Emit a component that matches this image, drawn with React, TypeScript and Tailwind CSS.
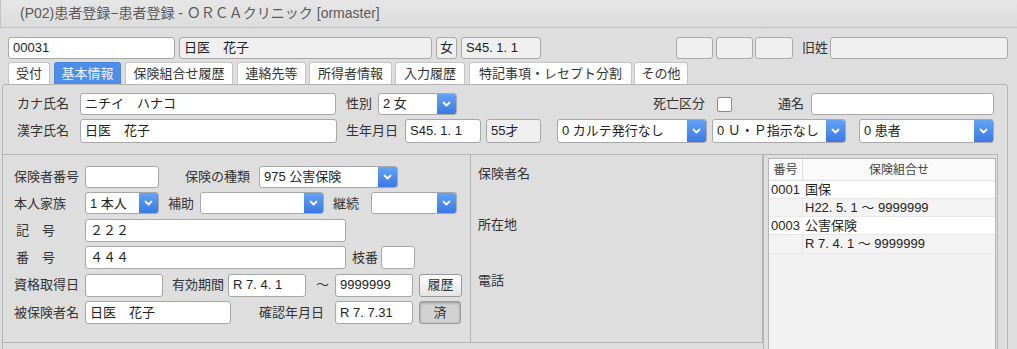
import React from "react";

const cx = (...a: (string | false | undefined)[]) => a.filter(Boolean).join(" ");

function Input({ cls, v, gray, center }: { cls: string; v?: string; gray?: boolean; center?: boolean }) {
  return (
    <div
      className={cx(
        "flex shrink-0 items-center rounded-[3px] border border-[#a8a8a8] px-[4px] text-[13px] text-[#222] whitespace-pre",
        gray ? "bg-[#efefef]" : "bg-white",
        center && "justify-center px-0",
        cls
      )}
    >
      {v}
    </div>
  );
}

function Chevron() {
  return (
    <svg width="9" height="6" viewBox="0 0 9 6">
      <polyline points="1.5,1.5 4.5,4.5 7.5,1.5" fill="none" stroke="white" strokeWidth="1.8" strokeLinecap="round" strokeLinejoin="round" />
    </svg>
  );
}

function Select({ cls, v }: { cls: string; v?: string }) {
  return (
    <div className={cx("flex shrink-0 items-stretch rounded-[3px] border border-[#a8a8a8] bg-white text-[13px] text-[#222]", cls)}>
      <div className="flex flex-1 items-center overflow-hidden whitespace-pre px-[4px]">{v}</div>
      <div className="flex w-[19px] items-center justify-center rounded-r-[2px] bg-linear-to-b from-[#64a3f6] to-[#3b78e2]">
        <Chevron />
      </div>
    </div>
  );
}

function Label({ cls, t }: { cls: string; t: string }) {
  return <div className={cx("shrink-0 whitespace-pre text-[13px] text-[#333]", cls)}>{t}</div>;
}

function Tab({ cls, t, active }: { cls: string; t: string; active?: boolean }) {
  return (
    <div
      className={cx(
        "flex h-[22px] shrink-0 items-center justify-center rounded-t-[3px] border border-b-0 text-[13px]",
        active ? "border-[#4a88e0] bg-[#4c8ee8] text-[#eef4ff]" : "border-[#c4c4c4] bg-white text-[#333]",
        cls
      )}
    >
      {t}
    </div>
  );
}

export default function App() {
  return (
    <div className="h-[349px] w-[1017px] overflow-hidden bg-[#dedede] font-['Liberation_Sans','Noto_Sans_CJK_JP',sans-serif]">
      {/* title bar */}
      <div className="flex h-[28px] items-center border-b border-l border-[#c2c2c2] bg-linear-to-b from-[#e6e6e6] to-[#dcdcdc] pl-[19px] text-[14px] text-[#5a5a5a]">
        (P02)患者登録−患者登録 - ＯＲＣＡクリニック [ormaster]
      </div>

      {/* top row */}
      <div className="mt-[9px] flex h-[22px] items-stretch pl-[8px]">
        <Input cls="w-[167px]" v="00031" />
        <Input cls="ml-[4px] w-[253px]" v="日医　花子" gray />
        <Input cls="ml-[4px] w-[21px]" v="女" gray center />
        <Input cls="ml-[4px] w-[80px]" v="S45. 1. 1" gray />
        <Input cls="ml-[135px] w-[37px]" gray />
        <Input cls="ml-[3px] w-[37px]" gray />
        <Input cls="ml-[2px] w-[38px]" gray />
        <Label cls="ml-[9px] w-[28px] self-center" t="旧姓" />
        <Input cls="w-[178px]" gray />
      </div>

      {/* tabs */}
      <div className="mt-[3px] flex pl-[8px]">
        <Tab cls="w-[42px]" t="受付" />
        <Tab cls="ml-[4px] w-[67px]" t="基本情報" active />
        <Tab cls="ml-[4px] w-[108px]" t="保険組合せ履歴" />
        <Tab cls="ml-[4px] w-[69px]" t="連絡先等" />
        <Tab cls="ml-[3px] w-[83px]" t="所得者情報" />
        <Tab cls="ml-[3px] w-[70px]" t="入力履歴" />
        <Tab cls="ml-[4px] w-[163px]" t="特記事項・レセプト分割" />
        <Tab cls="ml-[2px] w-[54px]" t="その他" />
      </div>

      {/* main panel */}
      <div className="ml-[2px] h-[280px] w-[1006px] rounded-t-[3px] border border-[#b5b5b5] bg-[#dedede] pt-[8px]">
        {/* upper row 1 */}
        <div className="flex h-[22px] items-stretch pl-[14px]">
          <Label cls="w-[63px] self-center" t="カナ氏名" />
          <Input cls="w-[256px]" v="ニチイ　ハナコ" />
          <Label cls="ml-[10px] w-[32px] self-center" t="性別" />
          <Select cls="w-[79px]" v="2 女" />
          <Label cls="ml-[196px] w-[64px] self-center" t="死亡区分" />
          <div className="h-[15px] w-[15px] shrink-0 self-center rounded-[2px] border border-[#8a8a8a] bg-white" />
          <Label cls="ml-[46px] w-[33px] self-center" t="通名" />
          <Input cls="w-[183px]" />
        </div>
        {/* upper row 2 */}
        <div className="mt-[4px] flex h-[24px] items-stretch pl-[14px]">
          <Label cls="w-[63px] self-center" t="漢字氏名" />
          <Input cls="w-[257px]" v="日医　花子" />
          <Label cls="ml-[9px] w-[59px] self-center" t="生年月日" />
          <Input cls="w-[76px]" v="S45. 1. 1" />
          <Input cls="ml-[5px] w-[55px]" v="55才" gray />
          <Select cls="ml-[16px] w-[150px]" v="0 カルテ発行なし" />
          <Select cls="ml-[5px] w-[134px]" v="0 Ｕ・Ｐ指示なし" />
          <Select cls="ml-[13px] w-[135px]" v="0 患者" />
        </div>

        {/* lower section */}
        <div className="mt-[11px] flex h-[220px] w-[995px] border-t border-r border-[#b5b5b5]">
          {/* left column */}
          <div className="flex h-[188px] w-[468px] shrink-0 flex-col gap-[4.4px] border-r border-b border-[#b5b5b5] pl-[11px] pt-[11px]">
            <div className="flex h-[22px] items-stretch">
              <Label cls="w-[71px] self-center" t="保険者番号" />
              <Input cls="w-[74px]" />
              <Label cls="ml-[26px] w-[74px] self-center" t="保険の種類" />
              <Select cls="w-[139px]" v="975 公害保険" />
            </div>
            <div className="flex h-[22px] items-stretch">
              <Label cls="w-[71px] self-center" t="本人家族" />
              <Select cls="w-[74px]" v="1 本人" />
              <Label cls="ml-[9px] w-[32px] self-center" t="補助" />
              <Select cls="w-[124px]" />
              <Label cls="ml-[9px] w-[38px] self-center" t="継続" />
              <Select cls="w-[86px]" />
            </div>
            <div className="flex h-[23px] items-stretch">
              <Label cls="w-[71px] self-center pl-[2px]" t="記　号" />
              <Input cls="w-[261px]" v="２２２" />
            </div>
            <div className="flex h-[23px] items-stretch">
              <Label cls="w-[71px] self-center pl-[2px]" t="番　号" />
              <Input cls="w-[261px]" v="４４４" />
              <Label cls="ml-[6px] w-[29px] self-center" t="枝番" />
              <Input cls="w-[34px]" />
            </div>
            <div className="flex h-[23px] items-stretch">
              <Label cls="w-[71px] self-center" t="資格取得日" />
              <Input cls="w-[78px]" />
              <Label cls="ml-[9px] w-[56px] self-center" t="有効期間" />
              <Input cls="w-[78px]" v="R 7. 4. 1" />
              <Label cls="ml-[10px] w-[19px] self-center" t="～" />
              <Input cls="w-[78px]" v="9999999" />
              <div className="ml-[6px] flex w-[43px] items-center justify-center rounded-[3px] border border-[#9a9a9a] bg-linear-to-b from-[#ffffff] to-[#e4e4e4] text-[13px] text-[#333]">
                履歴
              </div>
            </div>
            <div className="flex h-[23px] items-stretch">
              <Label cls="w-[71px] self-center" t="被保険者名" />
              <Input cls="w-[146px]" v="日医　花子" />
              <Label cls="ml-[28px] w-[76px] self-center" t="確認年月日" />
              <Input cls="w-[78px]" v="R 7. 7.31" />
              <div className="ml-[6px] flex w-[42px] items-center justify-center rounded-[3px] border border-[#9a9a9a] bg-[#d2d2d2] text-[13px] text-[#333] shadow-[inset_0_1px_3px_rgba(0,0,0,0.3)]">
                済
              </div>
            </div>
          </div>

          {/* middle column */}
          <div className="flex h-[188px] w-[292px] shrink-0 flex-col border-r border-b border-[#b5b5b5] pl-[7px] pt-[10px]">
            <Label cls="leading-[18px]" t="保険者名" />
            <Label cls="mt-[33px] leading-[18px]" t="所在地" />
            <Label cls="mt-[38px] leading-[18px]" t="電話" />
          </div>

          {/* right column */}
          <div className="w-[234px] shrink-0 border-l border-[#b5b5b5] pl-[4px] pt-[3px]">
            <div className="h-[210px] w-[228px] border border-[#b5b5b5] bg-[#f2f2f2] text-[13px] text-[#222]">
              <div className="flex h-[22px] border-b border-[#e0e0e0] bg-[#fafafa]">
                <div className="flex w-[34px] items-center justify-center border-r border-[#e0e0e0] text-[12px] text-[#444]">番号</div>
                <div className="flex flex-1 items-center justify-center text-[12px] text-[#444]">保険組合せ</div>
              </div>
              <div className="flex h-[18px] border-b border-[#e8e8e8] bg-white">
                <div className="flex w-[34px] items-center pl-[2px]">0001</div>
                <div className="flex flex-1 items-center pl-[2px]">国保</div>
              </div>
              <div className="flex h-[18px] border-b border-[#e8e8e8] bg-[#f3f3f3]">
                <div className="w-[34px] border-r border-[#e4e4e4]" />
                <div className="flex flex-1 items-center whitespace-pre pl-[2px]">H22. 5. 1 ～ 9999999</div>
              </div>
              <div className="flex h-[18px] border-b border-[#e8e8e8] bg-white">
                <div className="flex w-[34px] items-center pl-[2px]">0003</div>
                <div className="flex flex-1 items-center pl-[2px]">公害保険</div>
              </div>
              <div className="flex h-[19px] border-b border-[#e8e8e8] bg-[#f3f3f3]">
                <div className="w-[34px] border-r border-[#e4e4e4]" />
                <div className="flex flex-1 items-center whitespace-pre pl-[2px]">R 7. 4. 1 ～ 9999999</div>
              </div>
            </div>
          </div>
        </div>
      </div>
    </div>
  );
}
